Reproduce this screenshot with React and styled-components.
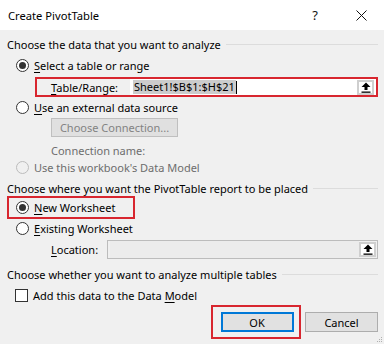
import React from 'react';
import styled, { createGlobalStyle } from 'styled-components';

const GlobalStyle = createGlobalStyle`
  html, body {
    margin: 0;
    padding: 0;
    background: #f0f0f0;
  }
  body {
    font-family: "Noto Sans", "Open Sans", sans-serif;
    font-size: 11px;
    color: #000000;
  }
`;

const Dialog = styled.div`
  width: 384px;
  height: 344px;
  background: #f0f0f0;
  display: flex;
  flex-direction: column;
  position: relative;
  overflow: hidden;
`;

const TitleBar = styled.div`
  height: 30px;
  background: #ffffff;
  display: flex;
  align-items: center;
  padding-left: 8px;
`;

const Title = styled.div`
  flex: 1;
  font-size: 11.2px;
`;

const TitleButton = styled.div`
  width: 46px;
  display: flex;
  justify-content: center;
  align-items: center;
  font-size: 13px;
  color: #111111;
`;

const Body = styled.div`
  display: flex;
  flex-direction: column;
  padding: 4px 6px 0 7px;
`;

const GroupHeader = styled.div`
  display: flex;
  align-items: center;
  height: ${p => p.h || 20}px;
  margin-top: ${p => p.mt || 0}px;
  white-space: nowrap;
  &::after {
    content: '';
    flex: 1;
    height: 1px;
    background: #dcdcdc;
    margin-left: 5px;
  }
`;

const Row = styled.div`
  display: flex;
  align-items: center;
  height: ${p => p.h || 20}px;
  margin-top: ${p => p.mt || 0}px;
  padding-left: ${p => p.indent || 0}px;
  color: ${p => (p.disabled ? '#6d6d6d' : '#000000')};
  white-space: nowrap;
`;

const RadioCircle = styled.span`
  width: 11px;
  height: 11px;
  border-radius: 50%;
  border: 1px solid ${p => (p.disabled ? '#bcbcbc' : '#333333')};
  background: ${p => (p.disabled ? '#f0f0f0' : '#ffffff')};
  display: inline-flex;
  align-items: center;
  justify-content: center;
  margin-right: 5px;
  flex-shrink: 0;
  &::after {
    content: '';
    display: ${p => (p.checked ? 'block' : 'none')};
    width: 7px;
    height: 7px;
    border-radius: 50%;
    background: #333333;
  }
`;

const CheckBox = styled.span`
  width: 11px;
  height: 11px;
  border: 1px solid #333333;
  background: #ffffff;
  margin-right: 5px;
  flex-shrink: 0;
`;

const Key = styled.span`
  text-decoration: underline;
  text-underline-offset: 2px;
`;

const Highlight = styled.div`
  display: flex;
  align-items: center;
  border: 2px solid #d8262f;
  height: ${p => p.h}px;
  width: ${p => p.w}px;
  box-sizing: border-box;
  margin-top: ${p => p.mt || 0}px;
  margin-left: ${p => p.ml || 0}px;
  padding-left: ${p => p.pl || 0}px;
`;

const FieldLabel = styled.span`
  width: ${p => p.w}px;
  flex-shrink: 0;
`;

const Field = styled.div`
  flex: 1;
  height: ${p => p.h || 18}px;
  display: flex;
  align-items: center;
  box-sizing: border-box;
  background: ${p => (p.disabled ? '#f0f0f0' : '#ffffff')};
  border: 1px solid ${p => (p.disabled ? '#bcbcbc' : 'transparent')};
  padding: 0 1px 0 2px;
`;

const FieldText = styled.div`
  flex: 1;
  height: 100%;
  display: flex;
  align-items: center;
  background: ${p => (p.disabled ? '#ececec' : 'transparent')};
`;

const Selected = styled.span`
  background: #cccccc;
  padding: 0 1px;
  line-height: 14px;
`;

const Caret = styled.span`
  width: 1px;
  height: 13px;
  background: #000000;
`;

const RefButton = styled.div`
  width: 17px;
  height: 15px;
  box-sizing: border-box;
  border: 2px solid #cfcfcf;
  background: #ffffff;
  display: flex;
  align-items: center;
  justify-content: center;
  flex-shrink: 0;
`;

const DisabledButton = styled.div`
  width: 127px;
  height: 19px;
  box-sizing: border-box;
  border: 1px solid #bfbfbf;
  background: #e0e0e0;
  color: #838383;
  display: flex;
  align-items: center;
  justify-content: center;
  margin-top: 1px;
  margin-left: 44px;
`;

const Footer = styled.div`
  display: flex;
  justify-content: flex-end;
  align-items: center;
  gap: 4px;
  margin-top: 1px;
`;

const OkFrame = styled.div`
  border: 2px solid #d8262f;
  width: 90px;
  height: 34px;
  box-sizing: border-box;
  display: flex;
  align-items: center;
  justify-content: center;
  padding-left: 2px;
`;

const Button = styled.div`
  width: ${p => p.w || 73}px;
  height: 20px;
  box-sizing: border-box;
  background: #e1e1e1;
  border: ${p => (p.primary ? '2px solid #0078d7' : '1px solid #adadad')};
  display: flex;
  align-items: center;
  justify-content: center;
`;

const Grip = styled.svg`
  position: absolute;
  right: 1px;
  bottom: 1px;
`;

const UpArrow = () => (
  <svg width="10" height="11" viewBox="0 0 10 11">
    <path d="M5 0.5 L9.5 5 L6.5 5 L6.5 8 L3.5 8 L3.5 5 L0.5 5 Z" fill="#000" />
    <rect x="0.5" y="9.5" width="9" height="1.3" fill="#000" />
  </svg>
);

const Radio = ({ checked, disabled, children, ...rest }) => (
  <Row disabled={disabled} {...rest}>
    <RadioCircle checked={checked} disabled={disabled} />
    <span>{children}</span>
  </Row>
);

export default function App() {
  return (
    <>
      <GlobalStyle />
      <Dialog>
        <TitleBar>
          <Title>Create PivotTable</Title>
          <TitleButton>?</TitleButton>
          <TitleButton>
            <svg width="11" height="11" viewBox="0 0 11 11">
              <path d="M0.5 0.5 L10.5 10.5 M10.5 0.5 L0.5 10.5" stroke="#111" strokeWidth="1" />
            </svg>
          </TitleButton>
        </TitleBar>
        <Body>
          <GroupHeader>Choose the data that you want to analyze</GroupHeader>
          <Radio checked h={22} indent={9}>
            <Key>S</Key>elect a table or range
          </Radio>
          <Highlight h={20} w={343} mt={1} ml={28} pl={14}>
            <FieldLabel w={79}>
              <Key>T</Key>able/Range:
            </FieldLabel>
            <Field h={16}>
              <FieldText>
                <Selected>Sheet1!$B$1:$H$21</Selected>
                <Caret />
              </FieldText>
              <RefButton>
                <UpArrow />
              </RefButton>
            </Field>
          </Highlight>
          <Radio indent={9}>
            <Key>U</Key>se an external data source
          </Radio>
          <DisabledButton>Choose Connection...</DisabledButton>
          <Row disabled h={18} mt={4} indent={44}>
            Connection name:
          </Row>
          <Radio disabled h={16} indent={9}>
            Use this workbook's Data Model
          </Radio>
          <GroupHeader h={16} mt={5}>
            Choose where you want the PivotTable report to be placed
          </GroupHeader>
          <Highlight h={23} w={128} ml={0} pl={7}>
            <RadioCircle checked />
            <span>
              <Key>N</Key>ew Worksheet
            </span>
          </Highlight>
          <Radio h={18} indent={9}>
            <Key>E</Key>xisting Worksheet
          </Radio>
          <Row h={19} mt={3} indent={44}>
            <FieldLabel w={56}>
              <Key>L</Key>ocation:
            </FieldLabel>
            <Field disabled h={19}>
              <FieldText disabled />
              <RefButton>
                <UpArrow />
              </RefButton>
            </Field>
          </Row>
          <GroupHeader h={18} mt={6}>
            Choose whether you want to analyze multiple tables
          </GroupHeader>
          <Row h={18} mt={3} indent={8}>
            <CheckBox />
            <span>
              Add this data to the Data <Key>M</Key>odel
            </span>
          </Row>
          <Footer>
            <OkFrame>
              <Button primary w={73}>OK</Button>
            </OkFrame>
            <Button w={73}>Cancel</Button>
          </Footer>
        </Body>
        <Grip width="6" height="6" viewBox="0 0 6 6">
          <rect x="4" y="0" width="1" height="1" fill="#b0b0b0" />
          <rect x="2" y="2" width="1" height="1" fill="#b0b0b0" />
          <rect x="4" y="2" width="1" height="1" fill="#b0b0b0" />
          <rect x="0" y="4" width="1" height="1" fill="#b0b0b0" />
          <rect x="2" y="4" width="1" height="1" fill="#b0b0b0" />
          <rect x="4" y="4" width="1" height="1" fill="#b0b0b0" />
        </Grip>
      </Dialog>
    </>
  );
}
